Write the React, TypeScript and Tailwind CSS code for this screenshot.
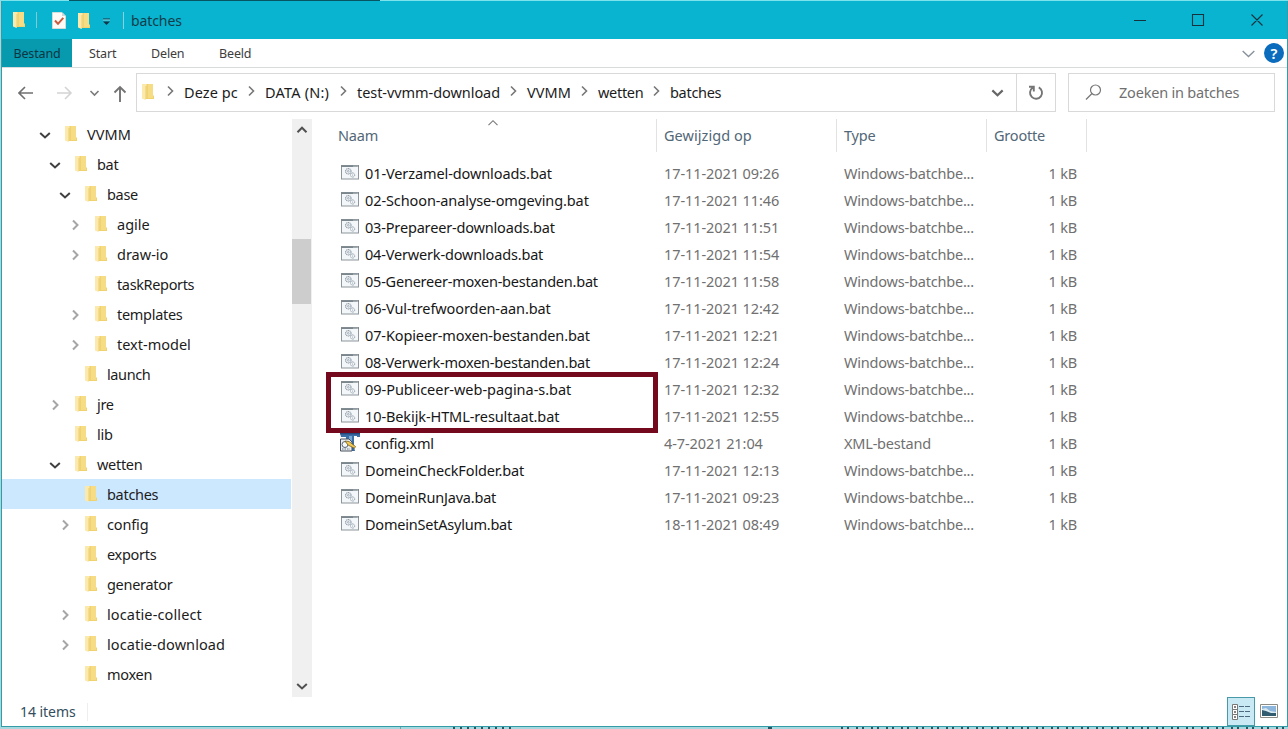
import React from 'react';

type Node = { name: string; level: number; state?: 'open' | 'closed'; selected?: boolean; spacing?: string };

const tree: Node[] = [
  { name: 'VVMM', level: 0, state: 'open', spacing: 'tracking-[0.05px]' },
  { name: 'bat', level: 1, state: 'open' },
  { name: 'base', level: 2, state: 'open' },
  { name: 'agile', level: 3, state: 'closed', spacing: 'tracking-[0px]' },
  { name: 'draw-io', level: 3, state: 'closed', spacing: 'tracking-[0px]' },
  { name: 'taskReports', level: 3, spacing: 'tracking-[-0.36px]' },
  { name: 'templates', level: 3, state: 'closed' },
  { name: 'text-model', level: 3, state: 'closed', spacing: 'tracking-[0px]' },
  { name: 'launch', level: 2, spacing: 'tracking-[-0.4px]' },
  { name: 'jre', level: 1, state: 'closed' },
  { name: 'lib', level: 1 },
  { name: 'wetten', level: 1, state: 'open' },
  { name: 'batches', level: 2, selected: true },
  { name: 'config', level: 2, state: 'closed', spacing: 'tracking-[-0.15px]' },
  { name: 'exports', level: 2 },
  { name: 'generator', level: 2 },
  { name: 'locatie-collect', level: 2, state: 'closed', spacing: 'tracking-[0.13px]' },
  { name: 'locatie-download', level: 2, state: 'closed', spacing: 'tracking-[0.08px]' },
  { name: 'moxen', level: 2 },
];

const indent = ['pl-[36px]', 'pl-[46px]', 'pl-[56px]', 'pl-[66px]'];

const BAT = 'Windows-batchbe...';
const files: [string, string, string, string][] = [
  ['01-Verzamel-downloads.bat', '17-11-2021 09:26', BAT, 'tracking-[-0.1px]'],
  ['02-Schoon-analyse-omgeving.bat', '17-11-2021 11:46', BAT, 'tracking-[-0.1px]'],
  ['03-Prepareer-downloads.bat', '17-11-2021 11:51', BAT, 'tracking-[-0.17px]'],
  ['04-Verwerk-downloads.bat', '17-11-2021 11:54', BAT, 'tracking-[-0.17px]'],
  ['05-Genereer-moxen-bestanden.bat', '17-11-2021 11:58', BAT, 'tracking-[-0.22px]'],
  ['06-Vul-trefwoorden-aan.bat', '17-11-2021 12:42', BAT, 'tracking-[-0.09px]'],
  ['07-Kopieer-moxen-bestanden.bat', '17-11-2021 12:21', BAT, 'tracking-[-0.12px]'],
  ['08-Verwerk-moxen-bestanden.bat', '17-11-2021 12:24', BAT, 'tracking-[-0.22px]'],
  ['09-Publiceer-web-pagina-s.bat', '17-11-2021 12:32', BAT, 'tracking-[-0.03px]'],
  ['10-Bekijk-HTML-resultaat.bat', '17-11-2021 12:55', BAT, 'tracking-[-0.1px]'],
  ['config.xml', '4-7-2021 21:04', 'XML-bestand', 'tracking-[-0.25px]'],
  ['DomeinCheckFolder.bat', '17-11-2021 12:13', BAT, 'tracking-[-0.13px]'],
  ['DomeinRunJava.bat', '17-11-2021 09:23', BAT, 'tracking-[-0.2px]'],
  ['DomeinSetAsylum.bat', '18-11-2021 08:49', BAT, 'tracking-[-0.22px]'],
];

function Folder() {
  return (
    <svg width="14" height="18" viewBox="0 0 14 18" className="block shrink-0">
      <path d="M4 1H12V12L13 13V16H4Z" fill="#f0d26e" />
      <path d="M7 1H12V15H7Z" fill="#f6dc84" />
      <path d="M1 1H5.5V15L4.5 17L1 15.5Z" fill="#fbe9ad" />
      <path d="M5 3V16" stroke="#e8c75e" strokeWidth="0.8" />
    </svg>
  );
}

type Dir = 'right' | 'down' | 'up';
const paths: Record<Dir, string> = { right: 'M5 2.5L9.5 7L5 11.5', down: 'M2.2 5L7 9.5L11.8 5', up: 'M2.5 9.2L7 4.7L11.5 9.2' };

function Chevron({ dir, className = '', w = 1.8, size = 14 }: { dir: Dir; className?: string; w?: number; size?: number }) {
  return (
    <svg width={size} height={size} viewBox="0 0 14 14" fill="none" stroke="currentColor" strokeWidth={w} className={`block shrink-0 ${className}`}>
      <path d={paths[dir]} />
    </svg>
  );
}

function BatchIcon() {
  return (
    <svg width="18" height="15" viewBox="0 0 18 15" fill="none" className="block">
      <rect x="0.5" y="0.5" width="17" height="13.5" fill="#f4f7f9" stroke="#8d969c" />
      <path d="M0 1.2H18" stroke="#7b858c" strokeWidth="1.6" />
      <path d="M12.5 1.2h1M14.5 1.2h1M16.3 1.2h.7" stroke="#e8ecef" />
      <circle cx="7.3" cy="6.3" r="2.7" stroke="#8b99a6" strokeWidth="1.1" strokeDasharray="1.2 .5" />
      <circle cx="7.3" cy="6.3" r="0.9" stroke="#8b99a6" strokeWidth="0.7" />
      <circle cx="11.6" cy="10" r="2.1" stroke="#8b99a6" strokeWidth="1" strokeDasharray="1 .4" />
      <circle cx="11.6" cy="10" r="0.6" fill="#8b99a6" />
    </svg>
  );
}

function XmlIcon() {
  return (
    <svg width="20" height="19" viewBox="0 0 20 19" className="block">
      <path d="M0 0H20V4H17V3H14V14L15 18H5L6 4H1Z" fill="#3c6ea6" />
      <path d="M0 .7H20" stroke="#244a7b" strokeWidth="1.4" />
      <path d="M9 3H12V16H9Z" fill="#79a9d6" />
      <path d="M.5 6H9L12 9V18H.5Z" fill="#e9edf1" stroke="#48525e" />
      <circle cx="5" cy="11.5" r="3" fill="#f5f8fa" stroke="#59636e" />
      <path d="M5 8L9 8.5L15.5 13.5L14.5 15.3L8 12Z" fill="#f1ca56" stroke="#765f22" strokeWidth=".8" />
      <path d="M2 16H10" stroke="#68727e" strokeDasharray="1.5 1" />
    </svg>
  );
}

function TitleBar() {
  return (
    <div className="flex h-[38px] items-center bg-[#08b4cf] text-[#123c4a]">
      <div className="ml-[10px]"><Folder /></div>
      <div className="ml-[10px] h-[16px] w-px bg-[#83c9d2]" />
      <svg width="14" height="17" viewBox="0 0 14 17" className="ml-[15px] block">
        <path d="M.5.5H10L13.5 4V16.5H.5Z" fill="#fffaf6" stroke="#d4dedb" />
        <path d="M10 .5V4H13.5" fill="#ccd7d7" />
        <path d="M3 8.5L6 11.8L11.3 5.8" fill="none" stroke="#c85b3e" strokeWidth="2" />
      </svg>
      <div className="mt-px ml-[11px]"><Folder /></div>
      <svg width="8" height="8" viewBox="0 0 8 8" className="mt-[4px] ml-[12px] block"><path d="M0 1H7" stroke="#113747" /><path d="M0 2H7" stroke="#c5e4e8" strokeWidth=".7" /><path d="M0 3.5H7L3.5 7Z" fill="#113747" /></svg>
      <div className="ml-[12px] h-[17px] w-px bg-[#8ed0d8]" />
      <div className="mt-[2px] ml-[7px] text-[14px] tracking-[-0.1px]">batches</div>
      <svg width="130" height="14" viewBox="0 0 130 14" fill="none" stroke="#14323e" strokeWidth="1.1" className="mr-[23px] ml-auto block">
        <path d="M0 7.5H12M58.5 1.5H69.5V12.5H58.5ZM117.5 1.5L128.5 12.5M128.5 1.5L117.5 12.5" />
      </svg>
    </div>
  );
}

function Ribbon() {
  return (
    <div className="flex h-[29px] items-stretch border-b border-[#d8dbdc] bg-white text-[12.5px] leading-[30px] tracking-[-0.15px] text-[#3d3d3d]">
      <div className="w-[70px] bg-[#0799ae] text-center text-[#0d3642]">Bestand</div>
      <div className="ml-[17px] w-[62px]">Start</div>
      <div className="w-[68px]">Delen</div>
      <div>Beeld</div>
      <div className="ml-auto flex items-center">
        <Chevron dir="down" className="text-[#85909b]" w={1.1} size={17} />
        <div className="mr-[3px] ml-[7px] flex size-[20px] items-center justify-center rounded-full bg-[#0b6cbe] text-[15px] leading-none font-semibold text-white">?</div>
      </div>
    </div>
  );
}

const crumbs = [
  ['Deze pc', 'w-[81px]', 'tracking-[0.08px]'],
  ['DATA (N:)', 'w-[92px]', 'tracking-[0.2px]'],
  ['test-vvmm-download', 'w-[170px]', 'tracking-[-0.06px]'],
  ['VVMM', 'w-[71px]', 'tracking-[0.05px]'],
  ['wetten', 'w-[72px]', 'tracking-[-0.3px]'],
  ['batches', 'w-[60px]', 'tracking-[-0.3px]'],
];

function AddressBar() {
  return (
    <div className="flex h-[51px] items-center bg-white pb-[2px] text-[14.5px]">
      <svg width="118" height="22" viewBox="0 0 118 22" fill="none" strokeWidth="1.6" className="mt-px ml-[16px] block shrink-0">
        <path d="M1 11H15M7 5L1 11L7 17" stroke="#707070" />
        <path d="M39 11H53M47 5L53 11L47 17" stroke="#d4d4d4" />
        <path d="M72.5 9L76.5 13L80.5 9" stroke="#7b7b7b" />
        <path d="M102 20V5M96.5 10.5L102 5L107.5 10.5" stroke="#737373" strokeWidth="1.9" />
      </svg>
      <div className="flex h-[39px] w-[920px] items-center border border-[#d9d9d9]">
        <div className="mb-px ml-[4px]"><Folder /></div>
        <div className="mb-[2px] ml-[8px] flex items-center">
          {crumbs.map(([label, width, spacing]) => (
            <div key={label} className={`flex shrink-0 items-center whitespace-nowrap text-[#1c1c1c] ${width}`}>
              <Chevron dir="right" className="mr-[7px] mb-px text-[#777]" w={1.6} size={14} />
              <span className={spacing}>{label}</span>
            </div>
          ))}
        </div>
        <Chevron dir="down" className="ml-auto text-[#666]" w={2} size={15} />
        <div className="ml-[11px] flex h-full w-[39px] items-center justify-center border-l border-[#d9d9d9]">
          <svg width="16" height="17" viewBox="0 0 16 17" fill="none" stroke="#757575" strokeWidth="1.9"><path d="M10.8 3.4A6 6 0 1 1 4.6 3.8M1 2.8H5.8V7.6" /></svg>
        </div>
      </div>
      <div className="ml-[12px] flex h-[39px] w-[207px] items-center border border-[#d9d9d9] text-[#707070]">
        <svg width="17" height="17" viewBox="0 0 17 17" fill="none" stroke="#777" strokeWidth="1.2" className="ml-[16px]"><circle cx="10.5" cy="6" r="5" /><path d="M7 9.5L1 15.5" /></svg>
        <div className="mb-[2px] ml-[17px] tracking-[-0.2px]">Zoeken in batches</div>
      </div>
    </div>
  );
}

function Tree() {
  return (
    <div className="mr-px w-[289px] shrink-0">
      {tree.map((n) => (
        <div key={n.name} className={`flex h-[30px] items-center ${indent[n.level]} ${n.selected ? 'bg-[#cce8ff]' : ''}`}>
          <div className="mt-[2px] w-[26px]">
            {n.state === 'open' && <Chevron dir="down" className="text-[#404040]" w={2} />}
            {n.state === 'closed' && <Chevron dir="right" className="text-[#a6a6a6]" w={2} />}
          </div>
          <div><Folder /></div>
          <span className={`ml-[9px] whitespace-nowrap ${n.spacing ?? 'tracking-[-0.3px]'}`}>{n.name}</span>
        </div>
      ))}
    </div>
  );
}

function ScrollBar() {
  return (
    <div className="flex h-full w-[20px] shrink-0 flex-col items-center bg-[#f0f0f0]">
      <Chevron dir="up" className="mt-[4px] mr-px text-[#505050]" w={2} />
      <div className="mt-[102px] h-[65px] w-[19px] self-start bg-[#cdcdcd]" />
      <Chevron dir="down" className="mt-auto mr-px mb-[4px] text-[#505050]" w={2} />
    </div>
  );
}

function FileList() {
  return (
    <div className="relative ml-[15px] flex-1">
      <div className="flex h-[33px] leading-[33px] tracking-[-0.2px] text-[#526777]">
        <div className="relative w-[330px] border-r border-[#e2e2e2] pl-[11px]">
          Naam
          <Chevron dir="up" className="absolute top-[-3px] left-[159px] text-[#777]" w={1.1} />
        </div>
        <div className="w-[180px] border-r border-[#e2e2e2] pl-[7px] tracking-[0.05px]">Gewijzigd op</div>
        <div className="w-[150px] border-r border-[#e2e2e2] pl-[7px]">Type</div>
        <div className="w-[100px] border-r border-[#e2e2e2] pl-[7px]">Grootte</div>
      </div>
      <div className="pt-[7px]">
        {files.map(([name, date, type, spacing]) => (
          <div key={name} className="flex h-[27px] items-center tracking-[-0.2px] whitespace-nowrap text-[#707070]">
            <div className="flex w-[337px] items-center pl-[14px] text-[#171717]">
              <div className="mb-px w-[24px]">{name === 'config.xml' ? <div className="-ml-px"><XmlIcon /></div> : <BatchIcon />}</div>
              <span className={spacing}>{name}</span>
            </div>
            <div className="w-[180px] tracking-[-0.08px]">{date}</div>
            <div className="w-[150px]">{type}</div>
            <div className="w-[83px] text-right">1 kB</div>
          </div>
        ))}
      </div>
      <div className="absolute top-[253px] left-[-1px] h-[61px] w-[332px] border-[5px] border-[#74091d]" />
    </div>
  );
}

function StatusBar() {
  return (
    <div className="flex h-[29px] items-center bg-white pl-[18px] text-[14px] tracking-[-0.05px] text-[#344d5d]">
      <span className="w-[67px]">14 items</span>
      <div className="h-[18px] w-px bg-[#eeeeee]" />
      <div className="mr-[6px] ml-auto flex h-[29px] w-[28px] items-center justify-center border border-[#479aa8] bg-[#c9e9f5]">
        <svg width="18" height="16" viewBox="0 0 18 16" fill="none" stroke="#777">
          <path fill="#fff" d="M.5.5H5.5V5.5H.5ZM.5 5.5H5.5V10.5H.5ZM.5 10.5H5.5V15.5H.5Z" />
          <path stroke="#333" strokeWidth="1.6" d="M2.2 3H3.8M2.2 8H3.8M2.2 13H3.8" />
          <path stroke="#4d6a80" d="M7 2.5H12M13 2.5H18M7 7.5H12M13 7.5H18M7 12.5H12M13 12.5H18" />
        </svg>
      </div>
      <svg width="18" height="14" viewBox="0 0 18 14" className="mr-[9px] -ml-px mb-[2px]">
        <path d="M.5.5H17.5V13.5H.5Z" fill="#fff" stroke="#8b8c86" />
        <path d="M2 2H16V12H2Z" fill="#8db6dc" />
        <path d="M2 5L6 4L10 7L16 8V10H2Z" fill="#d9e9ef" />
        <path d="M2 6L6 7L11 9H16V12H2Z" fill="#315c70" />
      </svg>
    </div>
  );
}

export default function App() {
  return (
    <div className="h-[729px] w-[1288px] overflow-hidden bg-[#a6d8df] font-['Noto_Sans','Open_Sans',sans-serif] text-[14.5px] leading-[20px] text-[#1c1c1c]">
      <div className="h-px bg-[#7ce3ed]"><div className="ml-[69px] h-px w-[311px] bg-[#075463]" /></div>
      <div className="ml-px h-[726px] w-[1287px] border-x border-b border-[#349ca7] bg-white">
        <TitleBar />
        <Ribbon />
        <div className="h-[51px]"><AddressBar /></div>
        <div className="flex h-[578px] overflow-hidden">
          <Tree />
          <ScrollBar />
          <FileList />
        </div>
        <StatusBar />
      </div>
      <div className="flex h-[2px] items-stretch">
        <div className="ml-[400px] w-[53px] border-l border-[#6ba4ad]" />
        <div className="w-[60px] bg-[repeating-linear-gradient(90deg,#235665_0_2px,#a6d8df_2px_7px)]" />
        <div className="ml-[255px] h-[2px] w-[4px] bg-[#235665]" />
        <div className="ml-[69px] flex-1 bg-[repeating-linear-gradient(90deg,#235665_0_2px,#a6d8df_2px_6px,#235665_6px_8px,#a6d8df_8px_15px)]" />
      </div>
    </div>
  );
}
